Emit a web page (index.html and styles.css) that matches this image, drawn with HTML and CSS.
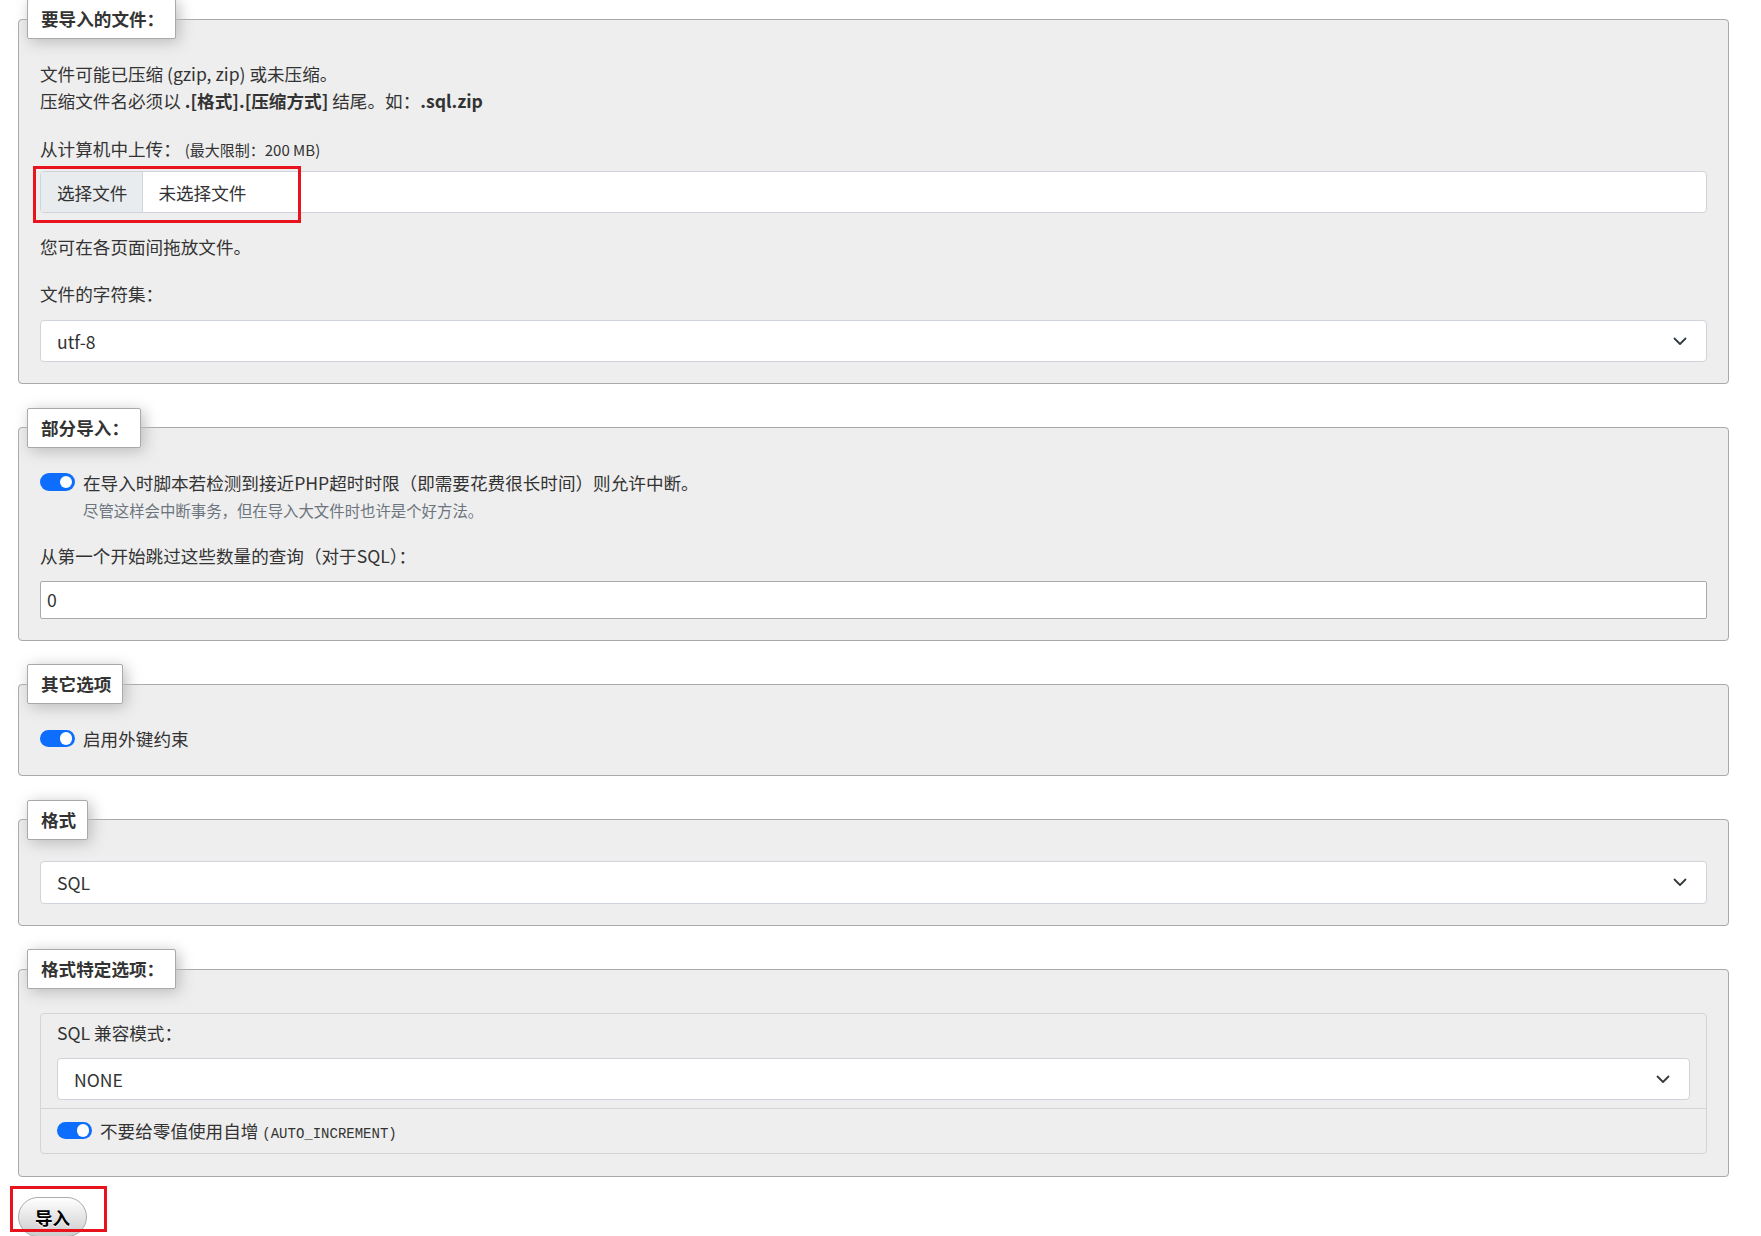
FILE: index.html
```html
<!DOCTYPE html>
<html lang="zh-CN">
<head>
    <meta charset="UTF-8">
    <meta name="viewport" content="width=device-width, initial-scale=1.0">
    <title>导入</title>
    <link rel="stylesheet" href="styles.css">
</head>
<body>
    <div class="page">
        <fieldset class="box">
            <legend>要导入的文件：</legend>
            <p class="intro">文件可能已压缩 (gzip, zip) 或未压缩。<br>压缩文件名必须以 <b>.[格式].[压缩方式]</b> 结尾。如：<b>.sql.zip</b></p>
            <div class="label upload-label">从计算机中上传： <small>(最大限制：200 MB)</small></div>
            <div class="file-input">
                <span class="file-btn">选择文件</span>
                <span class="file-name">未选择文件</span>
            </div>
            <p class="line drop-note">您可在各页面间拖放文件。</p>
            <div class="label charset-label">文件的字符集：</div>
            <div class="select">
                <span>utf-8</span>
                <svg class="chevron" width="14" height="9" viewBox="0 0 14 9"><polyline points="1.5,1.5 7,7 12.5,1.5"/></svg>
            </div>
        </fieldset>

        <fieldset class="box">
            <legend>部分导入：</legend>
            <div class="check">
                <span class="switch"></span>
                <span>在导入时脚本若检测到接近PHP超时时限（即需要花费很长时间）则允许中断。</span>
            </div>
            <div class="hint">尽管这样会中断事务，但在导入大文件时也许是个好方法。</div>
            <div class="label skip-label">从第一个开始跳过这些数量的查询（对于SQL）：</div>
            <input class="text-input" type="text" value="0">
        </fieldset>

        <fieldset class="box">
            <legend>其它选项</legend>
            <div class="check">
                <span class="switch"></span>
                <span>启用外键约束</span>
            </div>
        </fieldset>

        <fieldset class="box">
            <legend>格式</legend>
            <div class="select format-select">
                <span>SQL</span>
                <svg class="chevron" width="14" height="9" viewBox="0 0 14 9"><polyline points="1.5,1.5 7,7 12.5,1.5"/></svg>
            </div>
        </fieldset>

        <fieldset class="box last">
            <legend>格式特定选项：</legend>
            <div class="sub">
                <div class="sub-top">
                    <div class="label">SQL 兼容模式：</div>
                    <div class="select mode-select">
                        <span>NONE</span>
                        <svg class="chevron" width="14" height="9" viewBox="0 0 14 9"><polyline points="1.5,1.5 7,7 12.5,1.5"/></svg>
                    </div>
                </div>
                <div class="sub-bottom">
                    <div class="check flat">
                        <span class="switch"></span>
                        <span>不要给零值使用自增 <code>(AUTO_INCREMENT)</code></span>
                    </div>
                </div>
            </div>
        </fieldset>

        <button class="import">导入</button>

        <div class="mark mark-file"></div>
        <div class="mark mark-import"></div>
    </div>
</body>
</html>
```

FILE: styles.css
```css
body {
    margin: 0;
    font-family: "Noto Sans CJK SC", "Noto Sans", sans-serif;
    font-size: 17.6px;
    color: #333;
    background-color: #fff;
}
.page {
    position: relative;
    margin-top: -1px;
    padding: 0 32px 0 18px;
}
.box {
    margin: 0 0 23.5px;
    padding: 21px 21px 21px;
    min-width: 0;
    border: 1px solid #aaa;
    border-radius: 4px;
    background-color: #eee;
}
.box.last {
    margin-bottom: 0;
}
.box legend {
    margin-left: -13px;
    padding: 9px 11px 9px 13px;
    line-height: 20px;
    font-weight: bold;
    background-color: #fff;
    border: 1px solid #aaa;
    border-radius: 2px;
    box-shadow: 3px 3px 15px #bbb;
}
p {
    margin: 0;
}
.intro {
    line-height: 27px;
    margin-bottom: 21px;
}
.intro b {
    font-weight: bold;
}
.label, .line {
    line-height: 27px;
}
.label small {
    font-size: 15px;
    line-height: 1;
}
.upload-label {
    margin-bottom: 9px;
}
.drop-note {
    margin: 20px 0;
}
.charset-label {
    margin-bottom: 13px;
}
.file-input {
    display: flex;
    height: 42px;
    box-sizing: border-box;
    border: 1px solid #ced4da;
    border-radius: 4px;
    background-color: #fff;
    overflow: hidden;
}
.file-btn {
    display: flex;
    align-items: center;
    padding: 0 15px 0 16px;
    background-color: #e9ecef;
    border-right: 1px solid #ced4da;
}
.file-name {
    display: flex;
    align-items: center;
    padding-left: 15px;
}
.select {
    display: flex;
    align-items: center;
    justify-content: space-between;
    height: 42px;
    box-sizing: border-box;
    padding: 0 19px 0 16px;
    border: 1px solid #ced4da;
    border-radius: 4px;
    background-color: #fff;
}
.format-select {
    height: 43px;
}
.mode-select {
    margin-top: 12px;
}
.chevron {
    fill: none;
    stroke: #343a40;
    stroke-width: 1.8;
    stroke-linecap: round;
    stroke-linejoin: round;
}
.check {
    display: flex;
    align-items: center;
    gap: 8px;
    line-height: 27px;
    margin-bottom: 2px;
}
.check.flat {
    margin-bottom: 0;
}
.switch {
    position: relative;
    flex: none;
    width: 35px;
    height: 17.6px;
    border-radius: 9px;
    background-color: #0d6efd;
}
.switch::after {
    content: "";
    position: absolute;
    top: 2.6px;
    right: 2.6px;
    width: 12.4px;
    height: 12.4px;
    border-radius: 50%;
    background-color: #fff;
}
.hint {
    margin: 3px 0 0 43px;
    font-size: 15.4px;
    line-height: 23px;
    color: #6c757d;
}
.skip-label {
    margin: 20px 0 12px;
}
.text-input {
    display: block;
    width: 100%;
    height: 38px;
    box-sizing: border-box;
    margin: 0;
    padding: 0 6px;
    font: inherit;
    color: #333;
    border: 1px solid #aaa;
    border-radius: 2px;
    background-color: #fff;
}
.sub {
    margin: 3px 0 1px;
    border: 1px solid #d4d4d4;
    border-radius: 4px;
}
.sub-top {
    padding: 5px 16px 8px;
}
.sub-bottom {
    padding: 8px 16px 9px;
    border-top: 1px solid #d4d4d4;
}
code {
    font-family: "Liberation Mono", monospace;
    font-size: 14px;
    line-height: 1;
}
.import {
    display: block;
    margin-top: 20px;
    height: 40px;
    padding: 0 16px;
    font-family: inherit;
    font-size: 17.6px;
    font-weight: bold;
    color: #000;
    text-shadow: 0 1px 0 #fff;
    border: 1px solid #aaa;
    border-radius: 20px;
    background: linear-gradient(#fff, #ccc);
    cursor: pointer;
}
.mark {
    position: absolute;
    box-sizing: border-box;
    border: 3px solid #e8131c;
    pointer-events: none;
}
.mark-file {
    left: 33px;
    top: 167px;
    width: 268px;
    height: 57px;
}
.mark-import {
    left: 10px;
    top: 1187px;
    width: 97px;
    height: 46px;
}
```
